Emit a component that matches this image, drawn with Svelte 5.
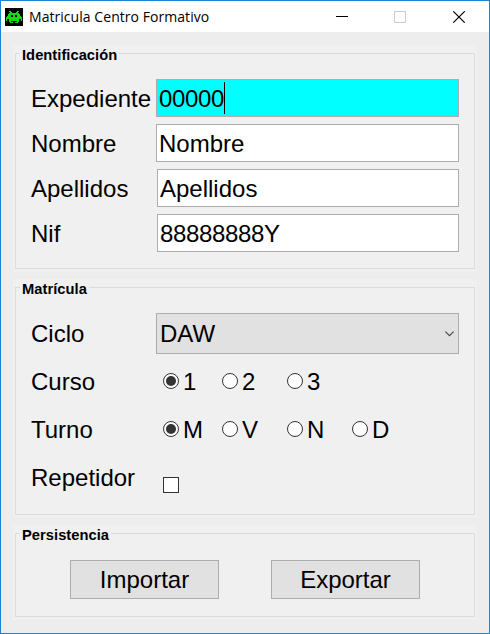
<script>
  let expediente = $state('00000');
  const fields = [
    { label: 'Nombre', value: 'Nombre', shift: 0 },
    { label: 'Apellidos', value: 'Apellidos', shift: 1 },
    { label: 'Nif', value: '88888888Y', shift: 1, tight: true }
  ];
  const groups = [
    { label: 'Curso', options: ['1', '2', '3'] },
    { label: 'Turno', options: ['M', 'V', 'N', 'D'] }
  ];
  const invader = [
    '0001100000011000',
    '0000110000110000',
    '0001111111111000',
    '0011111111111100',
    '0011100110011100',
    '0111100110011110',
    '1111111111111111',
    '1111111111111111',
    '1001111111111001',
    '1001111111111001',
    '0001100000011000',
    '0000111001110000'
  ];
</script>

<div class="window">
  <header>
    <svg class="logo" width="18" height="18" viewBox="0 0 18 18" shape-rendering="crispEdges">
      <rect width="18" height="18" fill="#000" />
      <g transform="translate(1 3)" fill="#0edc0e">
        {#each invader as row, y}
          {#each row.split('') as cell, x}
            {#if cell === '1'}<rect {x} {y} width="1" height="1" />{/if}
          {/each}
        {/each}
      </g>
    </svg>
    <h1>Matricula Centro Formativo</h1>
    <svg class="controls" width="130" height="12" viewBox="0 0 130 12" fill="none">
      <path d="M0 5.5h12" stroke="#000" />
      <rect x="58.5" y=".5" width="11" height="11" stroke="#ccc" />
      <path d="M117.3.3l11.4 11.4M128.7.3L117.3 11.7" stroke="#000" stroke-width="1.1" />
    </svg>
  </header>

  <main>
    <section class="panel">
      <div class="frame ident">
        <h2>Identificación</h2>
        <div class="rows">
          <div class="row">
            <span class="label low">Expediente</span>
            <div class="field active"><span class="low tight">{expediente}</span><i class="caret"></i></div>
          </div>
          {#each fields as f}
            <div class="row">
              <span class="label low">{f.label}</span>
              <div class="field" class:shifted={f.shift}><span class="low" class:tight={f.tight}>{f.value}</span></div>
            </div>
          {/each}
        </div>
      </div>
    </section>

    <section class="panel">
      <div class="frame matricula">
        <h2>Matrícula</h2>
        <div class="row tall">
          <span class="label">Ciclo</span>
          <div class="select">
            <span>DAW</span>
            <svg width="9" height="6" viewBox="0 0 9 6"><path d="M.4.6l4.1 4.1L8.6.6" fill="none" stroke="#444" stroke-width="1.1" /></svg>
          </div>
        </div>
        {#each groups as g}
          <div class="row line">
            <span class="label low">{g.label}</span>
            <div class="options">
              {#each g.options as option, i}
                <span class="option">
                  <svg width="16" height="16" viewBox="0 0 16 16">
                    <circle cx="8" cy="8" r="7.5" fill="#fff" stroke="#333" />
                    {#if i === 0}<circle cx="8" cy="8" r="5" fill="#333" />{/if}
                  </svg>
                  <span class="low">{option}</span>
                </span>
              {/each}
            </div>
          </div>
        {/each}
        <div class="row line">
          <span class="label low">Repetidor</span>
          <span class="check"></span>
        </div>
      </div>
    </section>

    <section class="panel">
      <div class="frame persist">
        <h2>Persistencia</h2>
        <div class="buttons">
          <button>Importar</button>
          <button>Exportar</button>
        </div>
      </div>
    </section>
  </main>
</div>

<style>
  .window {
    box-sizing: border-box;
    width: 490px;
    height: 634px;
    border: 1px solid #1883d7;
    background: #ededed;
    color: #000;
    font: 24px/28px "Liberation Sans", Arial, sans-serif;
    overflow: hidden;
  }
  header {
    display: flex;
    align-items: center;
    height: 31px;
    padding: 0 18px 0 4px;
    background: #fff;
  }
  .logo { margin-right: 6px; }
  h1 {
    margin: 0;
    flex: 1;
    font: 400 14px/20px "Open Sans", "Noto Sans", sans-serif;
    letter-spacing: 0.05px;
    white-space: nowrap;
  }
  .controls { margin-right: 5px; }
  main {
    display: flex;
    flex-direction: column;
    gap: 7px;
    padding: 13px 12px 0;
  }
  .panel {
    padding: 8px 2px 3px;
    background: #f0f0f0;
  }
  .frame {
    box-sizing: border-box;
    width: 460px;
    border: 1px solid #dcdcdc;
  }
  .ident { height: 216px; }
  .matricula { height: 228px; }
  .persist { height: 84px; }
  h2 {
    width: max-content;
    margin: -8px 0 0 4px;
    padding: 0 2px;
    background: #f0f0f0;
    font-size: 14.7px;
    font-weight: 700;
    letter-spacing: 0.04px;
    line-height: 18px;
  }
  .rows {
    display: flex;
    flex-direction: column;
    gap: 7px;
    padding-top: 15px;
  }
  .row {
    display: flex;
    align-items: center;
    height: 38px;
    padding: 0 15px;
  }
  .label {
    width: 125px;
    flex: none;
  }
  .low { padding-top: 2px; }
  .field {
    box-sizing: border-box;
    display: flex;
    align-items: center;
    flex: 1;
    height: 38px;
    padding-left: 2px;
    border: 1px solid #abadb3;
    background: #fff;
  }
  .shifted { margin-left: 1px; }
  .active { background: #0ff; }
  .tight { letter-spacing: -0.35px; }
  .caret {
    width: 1px;
    height: 32px;
    background: #000;
  }
  .tall {
    height: 41px;
    margin-top: 15px;
    margin-bottom: 3px;
  }
  .select {
    box-sizing: border-box;
    display: flex;
    align-items: center;
    justify-content: space-between;
    flex: 1;
    height: 41px;
    padding: 0 4px 0 3px;
    border: 1px solid #adadad;
    background: #e1e1e1;
  }
  .line { height: 48px; }
  .options {
    display: grid;
    grid-template-columns: 59px 65px 65px auto;
    padding-left: 7px;
  }
  .option {
    display: flex;
    align-items: center;
    gap: 4px;
  }
  .check {
    box-sizing: border-box;
    width: 16px;
    height: 16px;
    margin: 15px 0 0 7px;
    border: 1px solid #333;
    background: #fff;
  }
  .buttons {
    display: flex;
    gap: 52px;
    padding: 16px 0 0 54px;
  }
  button {
    box-sizing: border-box;
    width: 149px;
    height: 39px;
    padding: 0;
    border: 1px solid #adadad;
    background: #e1e1e1;
    color: #000;
    font: inherit;
  }
</style>
